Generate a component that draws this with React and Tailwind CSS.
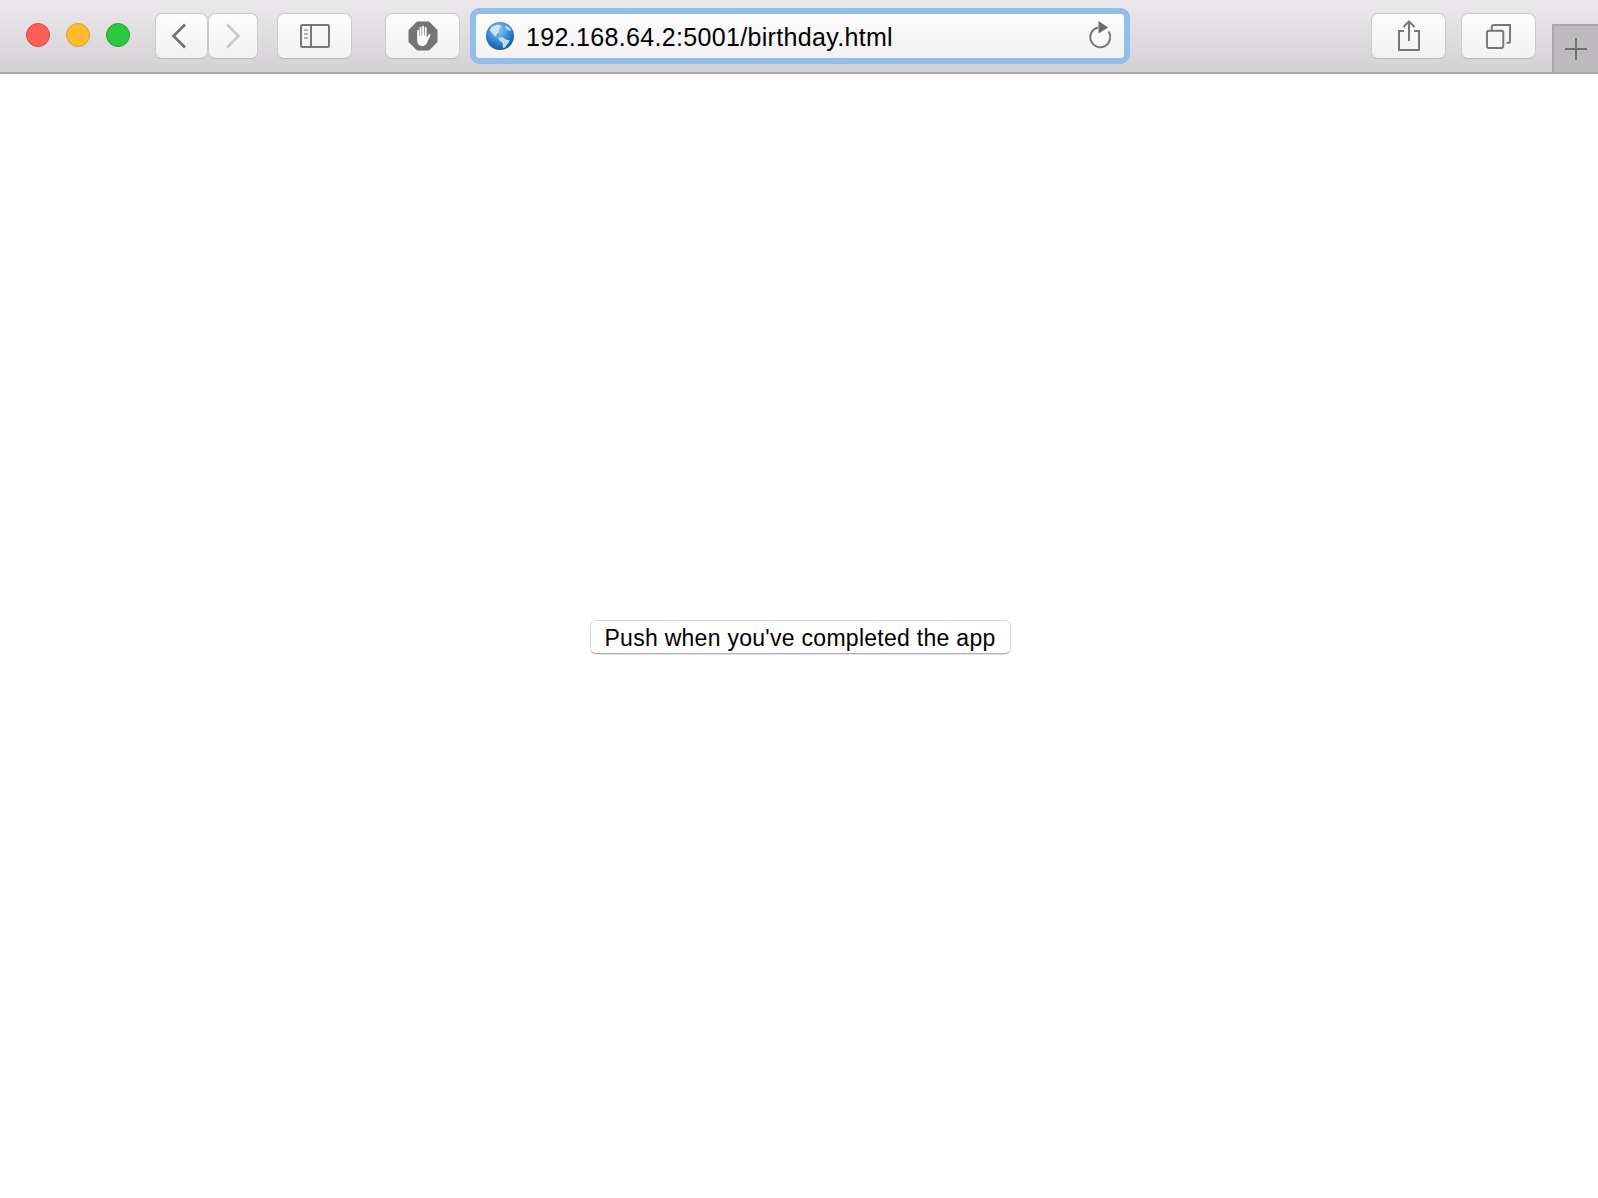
const toolbarButton = 'flex h-[46px] items-center justify-center rounded-[7px] border border-[#cbc9cb] border-b-[#b9b7b9] bg-gradient-to-b from-[#fcfcfc] to-[#f1f1f1]'

function Globe() {
  return (
    <svg width="28" height="28" viewBox="0 0 28 28" className="shrink-0">
      <defs>
        <radialGradient id="globeFill" cx="45%" cy="30%" r="75%">
          <stop offset="0%" stopColor="#8cc8f2" />
          <stop offset="55%" stopColor="#2f86d6" />
          <stop offset="100%" stopColor="#0f4f9e" />
        </radialGradient>
      </defs>
      <circle cx="14" cy="14" r="14" fill="url(#globeFill)" />
      <path d="M6 4.5 12 2.5 16 4 13.5 6.5 12.5 10.5 10 13 10.5 15 7.5 13 5 10 3.5 8Z" fill="#cfe2ee" />
      <path d="M12 15.5 16.5 15 20 17.5 24 18.5 21.5 22 19 25.5 17 26 16.5 21 13.5 18.5Z" fill="#c4d9e6" />
      <path d="M19 3 24 6 25 9 21.5 8 19.5 6Z" fill="#bcd8ea" />
    </svg>
  )
}

function StopHand() {
  return (
    <svg width="30" height="30" viewBox="0 0 30 30">
      <path d="M9 0.5H21L29.5 9V21L21 29.5H9L0.5 21V9Z" fill="#757575" />
      <path
        d="M9.2 9.5C9.2 8.5 11 8.5 11 9.5V15H11.6V6.5C11.6 5.5 13.5 5.5 13.5 6.5V14.5H14.2V5.5C14.2 4.5 16.1 4.5 16.1 5.5V14.5H16.8V6.8C16.8 5.8 18.6 5.8 18.6 6.8V16.8L20.6 13.6C21.3 12.6 23 13.3 22.4 14.5L19.4 21C18.4 23.4 16.8 25 14.4 25C11 25 9.2 22.8 9.2 19.5Z"
        fill="#fff"
      />
    </svg>
  )
}

function App() {
  return (
    <div className="flex h-screen flex-col overflow-hidden bg-white font-['Liberation_Sans',Arial,sans-serif] text-black">
      <header className="flex h-[74px] shrink-0 border-b-2 border-[#a9a7a9] bg-gradient-to-b from-[#ebe9ec] to-[#d3d1d4]">
        <div className="flex h-[72px] items-center gap-4 pb-[2px] pl-[26px]">
          <span className="h-6 w-6 rounded-full border border-[#e0443e] bg-[#fd5f57]" />
          <span className="h-6 w-6 rounded-full border border-[#dea123] bg-[#febb2e]" />
          <span className="h-6 w-6 rounded-full border border-[#1aab29] bg-[#2ac73f]" />
        </div>

        <div className="ml-[25px] flex h-[72px] items-center">
          <button className={`${toolbarButton} w-[53px] pr-[5px]`}>
            <svg width="16" height="26" viewBox="0 0 16 26" fill="none" stroke="#707070" strokeWidth="2.6">
              <path d="M14 1.5 2.5 13 14 24.5" />
            </svg>
          </button>
          <button className={`${toolbarButton} w-[50px]`}>
            <svg width="16" height="26" viewBox="0 0 16 26" fill="none" stroke="#c9c9c9" strokeWidth="2.6">
              <path d="M2 1.5 13.5 13 2 24.5" />
            </svg>
          </button>
          <button className={`${toolbarButton} ml-[19px] w-[75px]`}>
            <svg width="30" height="24" viewBox="0 0 30 24" fill="none" stroke="#777" strokeWidth="2">
              <rect x="1" y="1" width="28" height="22" rx="1.5" />
              <path d="M11 1V23" />
              <path d="M4 6H8M4 10H8M4 14H8" strokeWidth="1.6" stroke="#999" />
            </svg>
          </button>
          <button className={`${toolbarButton} ml-[33px] w-[75px]`}>
            <StopHand />
          </button>
        </div>

        <div className="ml-[10px] mt-2 flex h-14 w-[660px] items-center rounded-[9px] border-[6px] border-[#93bdec] bg-gradient-to-b from-[#fcfcfc] to-[#f2f2f2] pl-[10px] pr-[13px]">
          <Globe />
          <span className="ml-3 mt-[2px] flex-1 text-[25px] leading-none tracking-[0.33px]">192.168.64.2:5001/birthday.html</span>
          <svg width="24" height="32" viewBox="0 0 24 32" fill="none">
            <path d="M11 7.5A10 10 0 1 0 21.5 11.5" stroke="#777" strokeWidth="2" />
            <path d="M11.5 1 21 7.5 11.5 13.5Z" fill="#6b6b6b" />
          </svg>
        </div>

        <div className="ml-[241px] flex h-[72px] items-center gap-[15px]">
          <button className={`${toolbarButton} w-[75px]`}>
            <svg width="24" height="32" viewBox="0 0 24 32" fill="none" stroke="#777" strokeWidth="2">
              <path d="M7 11H2V30H22V11H17" />
              <path d="M12 21V2M6.5 7 12 1.5 17.5 7" />
            </svg>
          </button>
          <button className={`${toolbarButton} w-[75px]`}>
            <svg width="25" height="25" viewBox="0 0 26 26" fill="none" stroke="#777" strokeWidth="2">
              <rect x="1" y="7" width="17" height="18" rx="2" />
              <path d="M6 7V3.5C6 2 7 1 8.5 1H25V18.5C25 19 24.5 19.5 24 19.5H21.5" />
            </svg>
          </button>
        </div>

        <div className="ml-4 mt-6 flex h-12 flex-1 items-center justify-center border-l-2 border-t-2 border-[#a9a7a9] bg-[#bdbbbd]">
          <svg width="24" height="24" viewBox="0 0 24 24" stroke="#6f6f6f" strokeWidth="2">
            <path d="M1 12H23M12 1V23" />
          </svg>
        </div>
      </header>

      <main className="flex flex-1 items-center justify-center bg-white">
        <button className="ml-[2px] mt-[2px] h-[34px] w-[421px] rounded-[6px] border border-[#d8d8d8] border-b-[#b0b0b0] bg-white pt-[3px] text-center text-[23px] leading-none tracking-[0.28px] shadow-[0_1px_1px_rgba(0,0,0,0.12)]">
          Push when you've completed the app
        </button>
      </main>
    </div>
  )
}

export default App
